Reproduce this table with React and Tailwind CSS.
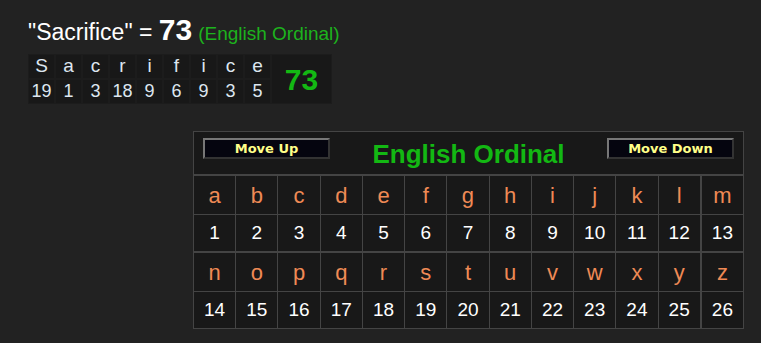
import React from "react";

const word = "Sacrifice";
const letters = "abcdefghijklmnopqrstuvwxyz".split("");

function LetterGrid({ start }) {
  const row = letters.slice(start, start + 13);
  return (
    <div className="grid grid-cols-13 border-t-2 border-[#444]">
      {row.map((l, i) => (
        <div
          key={l}
          className={`h-[39px] flex items-center justify-center text-[22px] text-[#ef8a55] border-b border-[#444] ${
            i < 12 ? "border-r" : ""
          } ${i === 12 ? "border-l" : ""}`}
        >
          {l}
        </div>
      ))}
      {row.map((l, i) => (
        <div
          key={l + "n"}
          className={`h-[36px] flex items-center justify-center text-[19px] text-white ${
            i < 12 ? "border-r border-[#444]" : ""
          } ${i === 12 ? "border-l border-[#444]" : ""}`}
        >
          {start + i + 1}
        </div>
      ))}
    </div>
  );
}

function RetroButton({ children }) {
  return (
    <button className="w-[127px] h-[21px] bg-[#05050f] border-2 border-t-[#777] border-l-[#777] border-b-[#333] border-r-[#333] text-[#ffff88] text-[13px] font-bold font-['DejaVu_Sans',sans-serif] leading-none">
      {children}
    </button>
  );
}

export default function App() {
  const values = word.split("").map((c) => c.toLowerCase().charCodeAt(0) - 96);
  const total = values.reduce((a, b) => a + b, 0);

  return (
    <div className="w-[761px] h-[343px] bg-[#222] font-['Liberation_Sans',Arial,sans-serif] pl-[28px] pt-[15px] overflow-hidden">
      {/* Title line */}
      <div className="flex items-baseline h-[33px]">
        <span className="text-[23px] text-white">"{word}" =&nbsp;</span>
        <span className="text-[30px] font-bold text-white leading-none">{total}</span>
        <span className="text-[19px] text-[#1db31d] ml-[6px]">(English Ordinal)</span>
      </div>

      {/* Word breakdown */}
      <div className="mt-[6px] flex w-fit gap-[2px] bg-[#1c1c1c] p-[1px] text-[#dde6f0]">
        <div className="grid grid-cols-9 gap-[2px]">
          {word.split("").map((c, i) => (
            <div key={i} className="w-[25px] h-[23px] bg-[#181818] flex items-center justify-center text-[19px]">
              {c}
            </div>
          ))}
          {values.map((v, i) => (
            <div key={i + "v"} className="w-[25px] h-[23px] bg-[#181818] flex items-center justify-center text-[18px]">
              {v}
            </div>
          ))}
        </div>
        <div className="w-[59px] bg-[#181818] flex items-center justify-center text-[30px] font-bold text-[#13b813]">
          {total}
        </div>
      </div>

      {/* Cipher chart */}
      <div className="ml-[165px] mt-[27px] w-[551px] border border-[#444] bg-[#181818]">
        <div className="h-[42px] flex items-start justify-between px-[9px] pt-[6px]">
          <RetroButton>Move Up</RetroButton>
          <span className="text-[26px] font-bold text-[#13b813] leading-none pt-[3px]">English Ordinal</span>
          <RetroButton>Move Down</RetroButton>
        </div>
        <LetterGrid start={0} />
        <LetterGrid start={13} />
      </div>
    </div>
  );
}
